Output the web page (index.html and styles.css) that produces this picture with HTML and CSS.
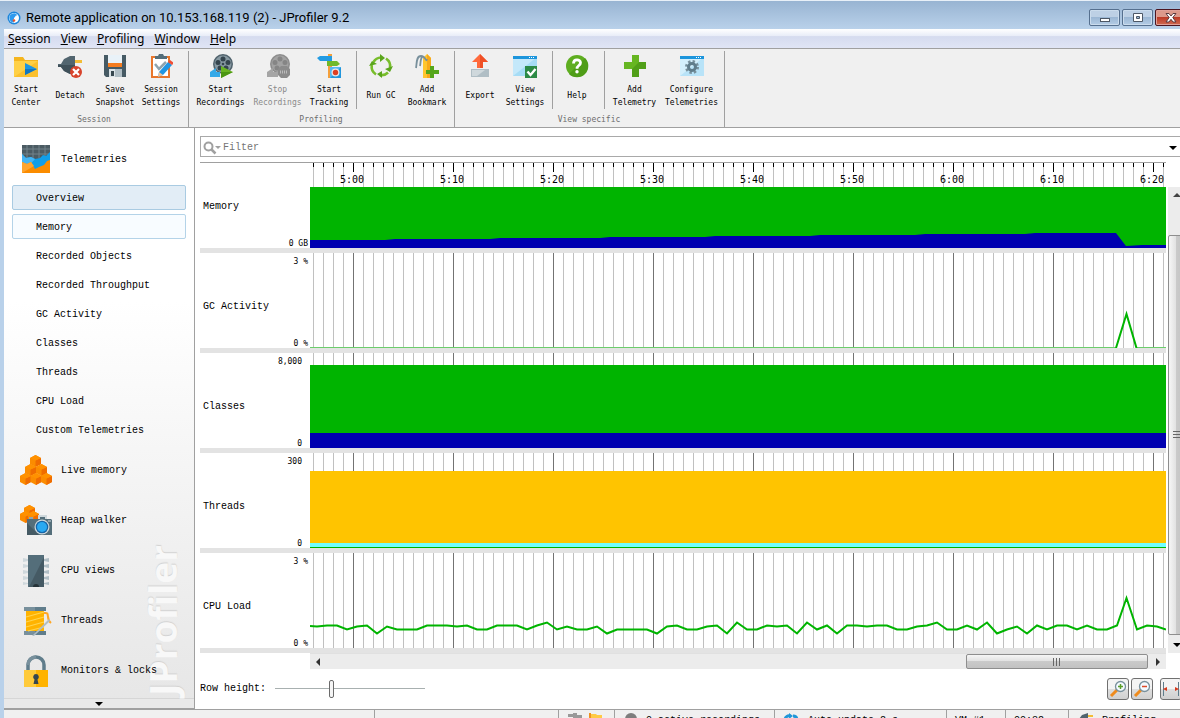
FILE: index.html
```html
<!DOCTYPE html>
<html lang="en">
<head>
    <meta charset="utf-8">
    <title>Remote application on 10.153.168.119 (2) - JProfiler 9.2</title>
    <link rel="stylesheet" href="styles.css">
</head>
<body>
<div class="window">
    <header class="titlebar">
        <svg class="app-icon" width="14" height="14" viewBox="0 0 14 14"><circle cx="7" cy="7" r="6.5" fill="#1c86dc"/><circle cx="7" cy="7" r="5" fill="#fff"/><path d="M2.500 8a4.600 4.600 0 0 1 8-4L7 7v4.600a4.600 4.600 0 0 1-4.500-3.600z" fill="#2f9aee"/><path d="M6 9.500L9.800 3 8 10z" fill="#fff"/><circle cx="7" cy="9.500" r="1.300" fill="#e8532a"/></svg>
        <h1>Remote application on 10.153.168.119 (2) - JProfiler 9.2</h1>
        <div class="window-buttons">
            <button type="button" aria-label="Minimize"><svg width="12" height="12" viewBox="0 0 12 12"><rect x="1.500" y="6.500" width="9" height="3" fill="#fff" stroke="#4d5866"/></svg></button>
            <button type="button" aria-label="Maximize"><svg width="12" height="12" viewBox="0 0 12 12"><path d="M1.500 1.500h9v8h-9zM4.500 4.500v2h3v-2z" fill="#fff" stroke="#4d5866" fill-rule="evenodd"/></svg></button>
            <button type="button" class="close" aria-label="Close"><svg width="12" height="12" viewBox="0 0 12 12"><path d="M1 1.500h3L6 4l2-2.500h3L7.800 5.500 11 10H8L6 7.300 4 10H1l3.200-4.500z" fill="#fff" stroke="#5b3b40"/></svg></button>
        </div>
    </header>

    <nav class="menubar">
        <button type="button"><u>S</u>ession</button>
        <button type="button"><u>V</u>iew</button>
        <button type="button"><u>P</u>rofiling</button>
        <button type="button"><u>W</u>indow</button>
        <button type="button"><u>H</u>elp</button>
    </nav>

    <div class="toolbar">
        <section class="group">
            <div class="tools">
                <button type="button" class="tool narrow">
                    <svg viewBox="0 0 24 24"><path d="M0 3h9l2 3h13v17H0z" fill="#f5b51d"/><path d="M0 7h24v16H0z" fill="#ffd045"/><path d="M0 23L24 7v16z" fill="#fbc02d"/><path d="M11 9l12 6-12 6z" fill="#1e96e0"/><path d="M11 15h12l-12 6z" fill="#1277c0"/></svg>
                    <span>Start<br>Center</span>
                </button>
                <button type="button" class="tool narrow">
                    <svg viewBox="0 0 24 24"><path d="M0 10h3l3-5 6-3h5v18h-5l-6-3-3-4H0z" fill="#52656f"/><path d="M0 11h17v9h-5l-6-3-3-4H0z" fill="#3f5059"/><path d="M17 6h7v3h-7zM17 14h4v2h-4z" fill="#f3bd35"/><circle cx="18" cy="18" r="6" fill="#d8432b"/><path d="M15 15l6 6M21 15l-6 6" stroke="#fff" stroke-width="2.200"/></svg>
                    <span>Detach</span>
                </button>
                <button type="button" class="tool">
                    <svg viewBox="0 0 24 24"><path d="M1 1h22v22H3l-2-2z" fill="#465a64"/><path d="M5 1h14v9H5z" fill="#e9f2f8"/><path d="M5 9h14v4H5z" fill="#f57c1f"/><path d="M6 15h13v8H6z" fill="#b0bec5"/><path d="M6 15h6v8H6z" fill="#dbe3e7"/><path d="M8 17h3v5H8z" fill="#37474f"/></svg>
                    <span>Save<br>Snapshot</span>
                </button>
                <button type="button" class="tool">
                    <svg viewBox="0 0 24 24"><path d="M3 3h17v20H3z" fill="#fff" stroke="#e8762c" stroke-width="2"/><path d="M6 5V2h3l1-2h4l1 2h3v3z" fill="#546e7a"/><path d="M6 10l4 5 7-7" fill="none" stroke="#90a4ae" stroke-width="2.500"/><path d="M10 18L19 8l4 3-9 10-5 2z" fill="#2196e3"/><path d="M19 8l2-2 4 3-2 2z" fill="#ef4e35"/><path d="M10 18l4 3-5 2z" fill="#f3c49a"/></svg>
                    <span>Session<br>Settings</span>
                </button>
            </div>
            <h2>Session</h2>
        </section>
        <section class="group">
            <div class="tools">
                <button type="button" class="tool wide">
                    <svg viewBox="0 0 24 24"><circle cx="14" cy="10" r="10" fill="#50626c"/><circle cx="14" cy="10" r="8.500" fill="#8799a2"/><g fill="#34444d"><circle cx="14" cy="5" r="2.500"/><circle cx="9" cy="8.500" r="2.500"/><circle cx="19" cy="8.500" r="2.500"/><circle cx="11" cy="14" r="2.500"/><circle cx="17" cy="14" r="2.500"/><circle cx="14" cy="10" r="1.300"/></g><path d="M1 18l6-4v4h4v5H1z" fill="#35a9e8"/><path d="M12 12l12 6-12 6z" fill="#69b421"/><path d="M12 18h12l-12 6z" fill="#4c9613"/></svg>
                    <span>Start<br>Recordings</span>
                </button>
                <button type="button" class="tool wide" disabled>
                    <svg viewBox="0 0 24 24"><circle cx="14" cy="10" r="10" fill="#8c8c8c"/><circle cx="14" cy="10" r="8.500" fill="#a2a2a2"/><g fill="#858585"><circle cx="14" cy="5" r="2.500"/><circle cx="9" cy="8.500" r="2.500"/><circle cx="19" cy="8.500" r="2.500"/><circle cx="11" cy="14" r="2.500"/></g><path d="M1 18l6-4v4h5v5H1z" fill="#a5a5a5"/><path d="M15 12h6l3 3v6l-3 3h-6l-3-3v-6z" fill="#8b8b8b"/><path d="M14 18h8" stroke="#bbb" stroke-width="3" stroke-dasharray="1 1"/></svg>
                    <span>Stop<br>Recordings</span>
                </button>
                <button type="button" class="tool">
                    <svg viewBox="0 0 24 24"><path d="M11 0h4v24h-4z" fill="#f5a03b"/><path d="M0 4l3-2h12v5H3z" fill="#239be3"/><path d="M10 7h10l3 3-3 2H10z" fill="#70b92b"/><path d="M13 13h11v11H13z" fill="#2196dd"/><path d="M13 24V13h11z" fill="#56b7f2"/><circle cx="18.500" cy="18.500" r="4" fill="#e7e7e7"/><circle cx="18.500" cy="18.500" r="2.700" fill="#dc3f24"/></svg>
                    <span>Start<br>Tracking</span>
                </button>
                <i class="divider"></i>
                <button type="button" class="tool">
                    <svg viewBox="0 0 24 24"><g fill="none" stroke="#78bd2b" stroke-width="2.600"><path d="M4.500 8A9 9 0 0 1 12 3.500"/><path d="M17 4.500A9.500 9.500 0 0 1 21 14"/><path d="M19 18.500A9 9 0 0 1 11 21"/><path d="M7 20.500A9.500 9.500 0 0 1 2.800 11"/></g><path d="M11 0l5 4-5 4zM24 12l-3 6-5-3zM13 17v7l-5-4zM0 12l3-5 5 3z" fill="#5aa51c"/></svg>
                    <span>Run GC</span>
                </button>
                <button type="button" class="tool">
                    <svg viewBox="0 0 24 24"><path d="M8 4l4-4 4 4v20H8z" fill="#ffc52e"/><path d="M12 0l4 4v20h-4z" fill="#f7a91b"/><path d="M1 14c1-5 0-12 5-12s5 7 6 3M5 12C6 8 5 4 8 2" fill="none" stroke="#78909c" stroke-width="1.800"/><path d="M15 12h4v4h5v4h-5v4h-4v-4h-4v-4h4z" fill="#55a61b"/></svg>
                    <span>Add<br>Bookmark</span>
                </button>
            </div>
            <h2>Profiling</h2>
        </section>
        <section class="group">
            <div class="tools">
                <button type="button" class="tool narrow">
                    <svg viewBox="0 0 24 24"><path d="M3 15h18v8H3z" fill="#b0bec5"/><path d="M4 16h13l-8 6H4z" fill="#cfd8dc"/><path d="M12 0l8 8h-5v6H9V8H4z" fill="#ff6a3c"/><path d="M12 0l8 8h-5v6h-3z" fill="#ef5026"/></svg>
                    <span>Export</span>
                </button>
                <button type="button" class="tool">
                    <svg viewBox="0 0 24 24"><path d="M0 3h24v19H0z" fill="#c4e8fa"/><path d="M0 22L24 3v19z" fill="#a6dcf5"/><path d="M0 2h24v3H0z" fill="#1c95dc"/><path d="M16 3.500h6" stroke="#fff" stroke-dasharray="1 1"/><path d="M12 12h12v12H12z" fill="#2c8a45"/><path d="M14.500 17.500l3 3.500 5-6" fill="none" stroke="#fff" stroke-width="2.400"/></svg>
                    <span>View<br>Settings</span>
                </button>
                <i class="divider"></i>
                <button type="button" class="tool">
                    <svg viewBox="0 0 24 24"><circle cx="12" cy="12" r="11" fill="#5eae20"/><path d="M20 4a11 11 0 0 1-16 16z" fill="#4f9d17"/><path d="M8.500 9.500c0-5 7-4.500 7-.8 0 3-3.500 2.600-3.500 6" fill="none" stroke="#fff" stroke-width="2.800"/><circle cx="12" cy="17.800" r="1.700" fill="#fff"/></svg>
                    <span>Help</span>
                </button>
                <i class="divider"></i>
                <button type="button" class="tool wide">
                    <svg viewBox="0 0 24 24"><path d="M9 1h7v7h7v7h-7v8H9v-8H1V8h8z" fill="#66b622"/><path d="M16 8h7v7h-7v8H9v-8z" fill="#519f18"/></svg>
                    <span>Add<br>Telemetry</span>
                </button>
                <button type="button" class="tool wide">
                    <svg viewBox="0 0 24 24"><path d="M0 3h24v19H0z" fill="#d3effc"/><path d="M0 22L24 3v19z" fill="#b8e3f8"/><path d="M0 2h24v3H0z" fill="#1c95dc"/><path d="M16 3.500h6" stroke="#fff" stroke-dasharray="1 1"/><circle cx="12" cy="13" r="5.500" fill="none" stroke="#78909c" stroke-width="3" stroke-dasharray="2.300 2"/><circle cx="12" cy="13" r="3.500" fill="none" stroke="#607d8b" stroke-width="3"/></svg>
                    <span>Configure<br>Telemetries</span>
                </button>
            </div>
            <h2>View specific</h2>
        </section>
    </div>

    <div class="content">
        <aside class="sidebar">
            <div class="watermark" aria-hidden="true">JProfiler</div>
            <nav class="views">
                <a href="#telemetries" class="view">
                    <svg viewBox="0 0 32 32"><path d="M2 1h28v28H2z" fill="#4b5b63"/><path d="M2 5h28M2 10h28M7 1v13M13 1v13M19 1v13M25 1v13" stroke="#72838b"/><path d="M2 10l4 4 5-1 4 2 5-1 3-3 3 1 4-4v21H2z" fill="#119ee8"/><path d="M2 10l4 4 5-1 4 2-8 9-5-4z" fill="#45b4f3"/><path d="M2 18l5 2 4-2 4 7 4-2 5-2 3-4 3-1v13H2z" fill="#fb8c00"/><path d="M2 18l5 2 4-2 3 4-12 7z" fill="#ffa530"/></svg>
                    Telemetries
                </a>
                <div class="subviews">
                    <a href="#overview" class="selected">Overview</a>
                    <a href="#memory" class="hovered">Memory</a>
                    <a href="#objects">Recorded Objects</a>
                    <a href="#throughput">Recorded Throughput</a>
                    <a href="#gc">GC Activity</a>
                    <a href="#classes">Classes</a>
                    <a href="#thread-count">Threads</a>
                    <a href="#cpu">CPU Load</a>
                    <a href="#custom">Custom Telemetries</a>
                </div>
                <a href="#live" class="view">
                    <svg viewBox="0 0 32 32">
                        <defs><g id="cube"><path d="M5.500 0l5.500 3v6l-5.500 3L0 9V3z" fill="#fb8c00"/><path d="M5.500 5.500L11 3v6l-5.500 3z" fill="#ef6c00"/><path d="M5.500 0L11 3 5.500 5.500 0 3z" fill="#ff9100"/></g></defs>
                        <use href="#cube" x="10" y="0"/><use href="#cube" x="5" y="9"/><use href="#cube" x="16" y="9"/><use href="#cube" x="0" y="18"/><use href="#cube" x="10.500" y="18"/><use href="#cube" x="21" y="18"/>
                    </svg>
                    Live memory
                </a>
                <a href="#heap" class="view">
                    <svg viewBox="0 0 32 32"><use href="#cube" x="4" y="0"/><use href="#cube" x="0" y="6"/><use href="#cube" x="8" y="6"/><path d="M18 10h9v5h-9z" fill="#cfd8dc"/><path d="M20 12h5v2h-5z" fill="#546e7a"/><path d="M7 14h24l1 1v15H7z" fill="#546e7a"/><path d="M7 30V18l12 12z" fill="#455a64"/><path d="M9 12h4v2H9zM28 15h3v2h-3z" fill="#90a4ae"/><circle cx="22" cy="22" r="7.500" fill="#cfd8dc"/><circle cx="22" cy="22" r="6.300" fill="#1565a8"/><circle cx="22" cy="22" r="5" fill="#29a9f2"/></svg>
                    Heap walker
                </a>
                <a href="#cpu-views" class="view">
                    <svg viewBox="0 0 32 32"><path d="M3 3l5 1v2l-5 1zM3 9l5 1v2l-5 1zM3 15l5 1v2l-5 1zM3 21l5 1v2l-5 1zM3 27l5 1v1l-5 1z" fill="#cfd8dc"/><path d="M29 3l-5 1v2l5 1zM29 9l-5 1v2l5 1zM29 15l-5 1v2l5 1zM29 21l-5 1v2l5 1zM29 27l-5 1v1l5 1z" fill="#b0bec5"/><path d="M8 0h16v32H8z" fill="#455a64"/><path d="M8 0h16v2L9 32H8z" fill="#546e7a"/><path d="M13 32a3 3 0 0 1 6 0z" fill="#263238"/></svg>
                    CPU views
                </a>
                <a href="#threads" class="view">
                    <svg viewBox="0 0 32 32"><path d="M4 2h22v4H4zM4 26h22v4H4z" fill="#607d8b"/><path d="M4 2h11v4H4zM4 26h11v4H4z" fill="#78909c"/><path d="M6 6h18v20H6z" fill="#ffb300"/><path d="M6 12l18-5M6 17l18-5M6 22l18-5M8 26l16-4" stroke="#ffd54f" stroke-width="1.200"/><path d="M24 8c7-1 1 5 7 10" fill="none" stroke="#ffa726" stroke-width="2"/><path d="M12 31l17-17 1 2-16 15z" fill="#b0bec5"/></svg>
                    Threads
                </a>
                <a href="#monitors" class="view">
                    <svg viewBox="0 0 32 32"><path d="M8 16V10a8 8 0 0 1 16 0v6" fill="none" stroke="#607d8b" stroke-width="3.500"/><path d="M8 10a8 8 0 0 1 8-8" fill="none" stroke="#78909c" stroke-width="3.500"/><path d="M4 15h24v17H4z" fill="#ffb300"/><path d="M4 15h12v17H4z" fill="#ffca3a"/><path d="M16 19a3 3 0 0 1 1.500 5.500l1 4.500h-5l1-4.500A3 3 0 0 1 16 19z" fill="#37474f"/></svg>
                    Monitors &amp; locks
                </a>
            </nav>
            <button type="button" class="more" aria-label="More views"><i class="arrow down"></i></button>
        </aside>

        <main class="telemetries">
            <div class="filter">
                <svg width="18" height="14" viewBox="0 0 18 14"><circle cx="5.500" cy="5.500" r="4" fill="none" stroke="#a0a0a0" stroke-width="2"/><path d="M8.500 8.500l4 4" stroke="#a0a0a0" stroke-width="2.500"/><path d="M12 5h6l-3 3z" fill="#a0a0a0"/></svg>
                <input type="text" placeholder="Filter" aria-label="Filter">
                <button type="button" aria-label="Filter history"><i class="arrow down"></i></button>
            </div>
            <div class="ruler">
                <ol>
                    <li>5:00</li><li>5:10</li><li>5:20</li><li>5:30</li><li>5:40</li><li>5:50</li><li>6:00</li><li>6:10</li><li>6:20</li>
                </ol>
            </div>
            <div class="viewport">
                <div class="rows">
                    <section class="row first">
                        <h3>Memory</h3>
                        <div class="scale"><span>0 GB</span></div>
                        <svg class="plot" viewBox="0 0 856 61" preserveAspectRatio="none">
                            <path d="M0 0H856V61H0z" fill="#00b400"/>
                            <path d="M0 53H75L85 52H180L190 51H290L300 50H395L405 49H500L510 48H605L615 47H715L725 46H806L816 59L832 58H856V61H0z" fill="#0000b0"/>
                        </svg>
                    </section>
                    <section class="row">
                        <h3>GC Activity</h3>
                        <div class="scale"><span>3 %</span><span>0 %</span></div>
                        <svg class="plot" viewBox="0 0 856 95" preserveAspectRatio="none">
                            <path d="M0 94.500H806M827 94.500H856" stroke="#6cce6c"/>
                            <path class="line" d="M806 95L816.500 61L826.500 95"/>
                        </svg>
                    </section>
                    <section class="row">
                        <h3>Classes</h3>
                        <div class="scale count"><span>8,000</span><span>0</span></div>
                        <svg class="plot" viewBox="0 0 856 95" preserveAspectRatio="none">
                            <path d="M0 12H856V80H0z" fill="#00b400"/>
                            <path d="M0 80H856V95H0z" fill="#0000b0"/>
                        </svg>
                    </section>
                    <section class="row">
                        <h3>Threads</h3>
                        <div class="scale count"><span>300</span><span>0</span></div>
                        <svg class="plot" viewBox="0 0 856 95" preserveAspectRatio="none">
                            <path d="M0 18H856V90H0z" fill="#ffc400"/>
                            <path d="M0 90H856V94H0z" fill="#70ffff"/>
                            <path d="M0 94H856V95H0z" fill="#00b400"/>
                        </svg>
                    </section>
                    <section class="row">
                        <h3>CPU Load</h3>
                        <div class="scale"><span>3 %</span><span>0 %</span></div>
                        <svg class="plot" viewBox="0 0 856 95" preserveAspectRatio="none">
                            <polyline class="line" points="0,73 7,73.500 17,72.500 27,72.500 37,76.500 47,73.500 57,72.500 67,80.500 77,73.500 87,76.500 97,76.500 107,76.500 117,72.500 127,72.500 137,72.500 147,73.500 157,72.500 167,76.500 177,76.500 187,72.500 197,72.500 207,72.500 217,76.500 227,72.500 237,69.500 247,76.500 257,73.500 267,76.500 277,76.500 287,73.500 297,80.500 307,76.500 317,76.500 327,76.500 337,76.500 347,80.500 357,73.500 367,72.500 377,76.500 387,76.500 397,73.500 407,72.500 417,80.500 427,69.500 437,76.500 447,76.500 457,72.500 467,73.500 477,72.500 487,80.500 497,69.500 507,76.500 517,72.500 527,80.500 537,72.500 547,72.500 557,73.500 567,72.500 577,72.500 587,76.500 597,76.500 607,73.500 617,72.500 627,69.500 637,76.500 647,76.500 657,72.500 667,76.500 677,69.500 687,80.500 697,76.500 707,73.500 717,80.500 727,72.500 737,76.500 747,72.500 757,72.500 767,76.500 777,72.500 787,76.500 797,76.500 807,72.500 816.500,45 827,76.500 837,72.500 847,73.500 856,76.500"/>
                        </svg>
                    </section>
                </div>
                <div class="scrollbar vertical">
                    <i class="arrow up"></i>
                    <div class="track"><div class="thumb"></div></div>
                    <i class="arrow down"></i>
                </div>
            </div>
            <div class="scrollbar horizontal">
                <i class="arrow left"></i>
                <div class="track"><div class="thumb"></div></div>
                <i class="arrow right"></i>
            </div>
            <div class="controls">
                <label for="row-height">Row height:</label>
                <input type="range" id="row-height" min="0" max="100" value="37">
                <div class="zoom">
                    <button type="button" aria-label="Zoom in"><svg width="18" height="18" viewBox="0 0 18 18"><path d="M2 16l7-7" stroke="#ef8b1d" stroke-width="3"/><circle cx="11.500" cy="6.500" r="5" fill="#f4faff" stroke="#78909c" stroke-width="1.300"/><path d="M11.500 4v5M9 6.500h5" stroke="#5a9e28" stroke-width="1.500"/></svg></button>
                    <button type="button" aria-label="Zoom out"><svg width="18" height="18" viewBox="0 0 18 18"><path d="M2 16l7-7" stroke="#ef8b1d" stroke-width="3"/><circle cx="11.500" cy="6.500" r="5" fill="#f4faff" stroke="#78909c" stroke-width="1.300"/><path d="M9 6.500h5" stroke="#dc4a28" stroke-width="1.500"/></svg></button>
                    <button type="button" class="fit" aria-label="Fit to window"><svg width="18" height="18" viewBox="0 0 18 18"><path d="M1.500 2v14M16.500 2v14" stroke="#607d8b"/><path d="M1 9l4-2v4zM17 9l-4-2v4z" fill="#d63a1e"/></svg></button>
                </div>
            </div>
        </main>
    </div>

    <footer class="statusbar">
        <div class="message"></div>
        <div class="info"></div>
        <div class="marks">
            <svg width="16" height="14" viewBox="0 0 16 14"><path d="M1 1h5V0h4v2h5v3H9v9H6V4H1z" fill="#999"/></svg>
            <svg width="14" height="14" viewBox="0 0 14 14"><path d="M0 0h2v14H0z" fill="#f0921e"/><path d="M2 1h5l1 1h5v9H2z" fill="#ffca45"/></svg>
        </div>
        <div class="recordings"><svg width="12" height="14" viewBox="0 0 12 14"><circle cx="6" cy="6" r="6" fill="#7d7d7d"/></svg><span>0 active recordings</span></div>
        <div class="update"><svg width="16" height="14" viewBox="0 0 16 14"><path d="M2 11V6a4 4 0 0 1 5-3M14 11V6a4 4 0 0 0-4-3" fill="none" stroke="#2196d8" stroke-width="3"/><path d="M6 0l4 3-4 3zM10 7l-4 3 4 3z" fill="#2196d8"/></svg><span>Auto-update 2 s</span></div>
        <div class="vm">VM #1</div>
        <div class="time">00:32</div>
        <div class="state"><svg width="16" height="14" viewBox="0 0 16 14"><path d="M0 6h2l3-4 6-2v12H6L2 8H0z" fill="#50646f"/><path d="M11 2h5v2h-5zM11 8h5v2h-5z" fill="#f3bd35"/></svg><span>Profiling</span></div>
    </footer>
</div>
</body>
</html>
```
FILE: styles.css
```css
* {
    box-sizing: border-box;
}
body {
    margin: 0;
    overflow: hidden;
    background: #b9d1ea;
    color: #000;
    font: 10px/14px "Liberation Mono", monospace;
}
button, input {
    font: inherit;
    color: inherit;
}
button {
    margin: 0;
    padding: 0;
    border: none;
    background: none;
}
a {
    color: inherit;
    text-decoration: none;
}
h1, h2, h3 {
    margin: 0;
    font: inherit;
}
svg {
    display: block;
    flex: none;
}

/* the window is slightly larger than the screen */
.window {
    display: flex;
    flex-direction: column;
    width: calc(100vw + 12px);
    height: calc(100vh + 14px);
    border: 0 solid #b9d1ea;
    border-width: 0 4px;
}
.titlebar {
    display: flex;
    align-items: center;
    gap: 5px;
    height: 29px;
    margin: 0 -4px;
    padding: 5px 6px 0 7px;
    border-top: 1px solid #e8f0f8;
    background: linear-gradient(#98b4d2, #b9d1ea);
    font: 13px/18px Roboto, sans-serif;
}
.titlebar h1 {
    flex: 1;
}
.window-buttons {
    display: flex;
    gap: 2px;
}
.window-buttons button {
    display: flex;
    align-items: center;
    justify-content: center;
    width: 31px;
    height: 17px;
    border: 1px solid #56708f;
    border-radius: 2px;
    box-shadow: inset 0 0 0 1px #cbdced;
    background: linear-gradient(#bdd0e5 45%, #9bb7d4 50%, #b4cce5);
}
.window-buttons .close {
    border-color: #4c1620;
    box-shadow: inset 0 0 0 1px #e0a199;
    background: linear-gradient(#dc998b 45%, #bd3b27 50%, #cf6b52);
}

.menubar {
    display: flex;
    gap: 10px;
    height: 20px;
    padding-left: 4px;
    border-bottom: 1px solid #a0a0a0;
    background: linear-gradient(#fff, #e9edf8 35%, #d5dbef 40%, #e0e5f5);
    font: 12px/19px "Noto Sans", sans-serif;
}

.toolbar {
    display: flex;
    height: 79px;
    padding-top: 2px;
    border-bottom: 1px solid #a0a0a0;
    background: #f0f0f0;
    font: 8px/13px "DejaVu Sans Mono", monospace;
}
.group {
    padding: 0 4px 0 3px;
    border-right: 1px solid #a0a0a0;
}
.group:first-child {
    padding-left: 0;
}
.group h2 {
    color: #6d6d6d;
    text-align: center;
}
.tools {
    display: flex;
    height: 62px;
}
.tool {
    display: flex;
    flex-direction: column;
    align-items: center;
    width: 46px;
    padding-top: 3px;
    line-height: 13px;
    white-space: nowrap;
}
.tool svg {
    width: 24px;
    height: 24px;
}
.tool span {
    display: flex;
    flex-direction: column;
    justify-content: center;
    height: 35px;
}
.tool.narrow {
    width: 44px;
}
.tool.wide {
    width: 57px;
}
.tool:disabled {
    color: #8a8a8a;
}
.divider {
    width: 1px;
    height: 58px;
    margin: 0 1px 0 4px;
    background: #a0a0a0;
}

.content {
    flex: 1;
    display: flex;
    min-height: 0;
    background: #fff;
}
.sidebar {
    position: relative;
    display: flex;
    flex-direction: column;
    justify-content: space-between;
    width: 191px;
    border-right: 1px solid #a0a0a0;
    background: linear-gradient(#fff 30%, #e6e6e6);
}
.views {
    position: relative;
    padding-top: 6px;
}
.view {
    display: flex;
    align-items: center;
    gap: 9px;
    height: 50px;
    padding: 1px 0 0 16px;
}
.view svg {
    width: 32px;
    height: 32px;
}
.subviews {
    display: flex;
    flex-direction: column;
    gap: 4px;
    padding: 1px 8px 3px;
}
.subviews a {
    padding: 6px 23px 3px;
    border: 1px solid transparent;
    border-radius: 2px;
}
.subviews .selected {
    border-color: #a9cbe2;
    background: #e2edf6;
}
.subviews .hovered {
    border-color: #b4d3e8;
    background: #f8fcff;
}
.watermark {
    position: absolute;
    right: 10px;
    bottom: 13px;
    writing-mode: vertical-rl;
    transform: rotate(180deg);
    color: #f8f8f8;
    text-shadow: 1px 0 1px #d0d0d0;
    font: bold 37px/42px "Open Sans", sans-serif;
}
.more {
    display: flex;
    align-items: center;
    justify-content: center;
    height: 11px;
    border-top: 1px solid #d6d6d6;
    border-bottom: 1px solid #a0a0a0;
    background: #e9e9e9;
}

.arrow {
    width: 0;
    height: 0;
    border: 4px solid transparent;
}
.arrow.down {
    border-top-color: #000;
    border-bottom: 0;
}
.arrow.up {
    border-bottom-color: #444;
    border-top: 0;
}
.arrow.left {
    border-right-color: #333;
    border-left: 0;
}
.arrow.right {
    border-left-color: #333;
    border-right: 0;
}

.telemetries {
    flex: 1;
    display: flex;
    flex-direction: column;
    min-width: 0;
    padding: 8px 3px 0 5px;
}
.filter {
    display: flex;
    align-items: center;
    gap: 2px;
    height: 21px;
    margin-bottom: 5px;
    padding: 2px 7px 0 2px;
    border: 1px solid #a9a9a9;
}
.filter input {
    flex: 1;
    padding: 0;
    border: none;
    outline: none;
}
.filter input::placeholder {
    color: #757575;
    opacity: 1;
}
.filter button {
    display: flex;
}
.ruler {
    margin-right: 19px;
    padding-left: 110px;
    border-top: 1px solid #a0a0a0;
}
.ruler ol {
    display: flex;
    height: 24px;
    margin: 0;
    padding: 10px 0 0 30px;
    overflow: hidden;
    list-style: none;
    /* long ticks every ten seconds, short ones every second */
    background:
        linear-gradient(90deg, #000 1px, transparent 1px) 43px 0 / 100px 9px repeat-x,
        linear-gradient(90deg, #000 1px, transparent 1px) 3px 0 / 10px 4px repeat-x,
        linear-gradient(90deg, #fff 1px, transparent 1px) 43px 0 / 100px 100%,
        linear-gradient(90deg, #c0c0c0 1px, transparent 1px) 3px 0 / 10px 100%;
}
.ruler li {
    flex: none;
    width: 100px;
    font-family: "DejaVu Sans Mono", monospace;
}
.viewport {
    display: flex;
    flex: 1;
    gap: 2px;
    min-height: 0;
}
.rows {
    flex: 1;
    overflow: hidden;
}
.row {
    display: flex;
    height: 100px;
    border-bottom: 5px solid #e3e3e3;
}
.row.first {
    height: 66px;
}
.row h3 {
    width: 74px;
    padding: 47px 0 0 3px;
    white-space: nowrap;
}
.row.first h3 {
    padding-top: 13px;
}
.scale {
    display: flex;
    flex-direction: column;
    justify-content: space-between;
    width: 36px;
    padding: 4px 2px 0 0;
    font: 8px/9px "DejaVu Sans Mono", monospace;
    text-align: right;
}
.scale.count {
    padding-right: 8px;
}
.row.first .scale {
    justify-content: flex-end;
}
.plot {
    flex: 1;
    min-width: 0;
    height: 100%;
    background-image:
        linear-gradient(90deg, #737373 1px, transparent 1px),
        linear-gradient(90deg, #c0c0c0 1px, transparent 1px);
    background-size: 100px 100%, 10px 100%;
    background-position: 43px 0, 3px 0;
}
.line {
    fill: none;
    stroke: #00b400;
    stroke-width: 2;
    vector-effect: non-scaling-stroke;
}

.scrollbar {
    display: flex;
    align-items: center;
    background: #ececec;
}
.scrollbar .track {
    flex: 1;
    display: flex;
}
.thumb {
    display: flex;
    align-items: center;
    justify-content: center;
    border: 1px solid #8e8e8e;
    border-radius: 2px;
}
.thumb::after {
    content: "";
    width: 8px;
    height: 8px;
}
.scrollbar.vertical {
    flex-direction: column;
    width: 17px;
    padding: 6px 0;
}
.vertical .track {
    width: 100%;
    margin: 6px 0;
    padding: 32px 0 2px;
}
.vertical .thumb {
    width: 100%;
    background: linear-gradient(90deg, #f6f6f6, #e2e2e2 45%, #cacaca 50%, #c2c2c2);
}
.vertical .thumb::after {
    background: repeating-linear-gradient(#666 0 1px, transparent 1px 3px);
}
.scrollbar.horizontal {
    height: 16px;
    margin: 0 19px 0 110px;
    padding: 0 6px;
    border-top: 1px solid #e0e0e0;
}
.horizontal .track {
    justify-content: flex-end;
    margin: 0 8px;
}
.horizontal .thumb {
    width: 182px;
    height: 15px;
    background: linear-gradient(#f6f6f6, #e2e2e2 45%, #cacaca 50%, #c2c2c2);
}
.horizontal .thumb::after {
    background: repeating-linear-gradient(90deg, #666 0 1px, transparent 1px 3px);
}

.controls {
    display: flex;
    align-items: center;
    gap: 9px;
    height: 40px;
    padding-right: 3px;
}
.controls input {
    width: 150px;
    height: 20px;
    margin: 0;
    appearance: none;
    background: linear-gradient(#a8b0b0, #a8b0b0) 0 9px / 100% 1px no-repeat;
}
.controls input::-webkit-slider-thumb {
    width: 5px;
    height: 18px;
    border: 1px solid #6b6b6b;
    border-radius: 2px;
    appearance: none;
    background: #f5f5f5;
}
.zoom {
    display: flex;
    gap: 2px;
    margin-left: auto;
}
.zoom button {
    display: flex;
    align-items: center;
    justify-content: center;
    width: 22px;
    height: 22px;
    border: 1px solid #707070;
    border-radius: 3px;
    background: linear-gradient(#f4f4f4 50%, #dedede 50%, #d0d0d0);
}
.zoom .fit {
    margin-left: 5px;
}

.statusbar {
    display: flex;
    height: 23px;
    border-top: 1px solid #a0a0a0;
    background: #f0f0f0;
}
.statusbar div {
    display: flex;
    align-items: center;
    gap: 9px;
    padding-left: 8px;
    border-right: 1px solid #a0a0a0;
    white-space: nowrap;
}
.statusbar svg {
    align-self: flex-start;
    margin-top: 3px;
}
.statusbar .message {
    width: 371px;
}
.statusbar .info {
    width: 184px;
}
.statusbar .marks {
    gap: 6px;
    width: 56px;
}
.statusbar .recordings {
    width: 160px;
    padding-left: 10px;
}
.statusbar .update {
    width: 172px;
}
.statusbar .vm {
    width: 59px;
}
.statusbar .time {
    width: 63px;
}
.statusbar .state {
    flex: 1;
    border: none;
}
```
